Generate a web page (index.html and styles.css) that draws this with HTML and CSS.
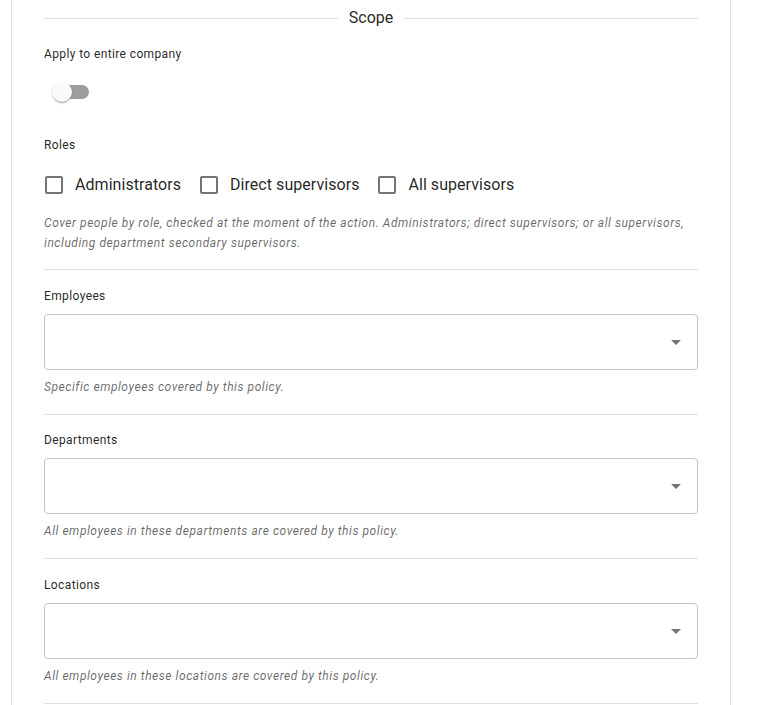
FILE: index.html
```html
<!DOCTYPE html>
<html lang="en">
<head>
<meta charset="utf-8">
<title>Scope</title>
<link rel="stylesheet" href="styles.css">
</head>
<body>
<div class="card">
  <div class="divider-title"><span class="line"></span><span class="title">Scope</span><span class="line"></span></div>

  <div class="field-label apply-label">Apply to entire company</div>
  <div class="switch">
    <span class="track"></span>
    <span class="thumb"></span>
  </div>

  <div class="field-label roles-label">Roles</div>
  <div class="checks">
    <label class="check"><span class="box"></span><span class="check-text">Administrators</span></label>
    <label class="check"><span class="box"></span><span class="check-text">Direct supervisors</span></label>
    <label class="check"><span class="box"></span><span class="check-text">All supervisors</span></label>
  </div>
  <p class="helper roles-helper">Cover people by role, checked at the moment of the action. Administrators; direct supervisors; or all supervisors, including department secondary supervisors.</p>

  <section class="section">
    <div class="field-label">Employees</div>
    <div class="select"><svg class="arrow" width="10" height="5" viewBox="0 0 10 5"><path d="M0 0h10L5 5z" fill="#757575"/></svg></div>
    <p class="helper">Specific employees covered by this policy.</p>
  </section>

  <section class="section tight">
    <div class="field-label">Departments</div>
    <div class="select"><svg class="arrow" width="10" height="5" viewBox="0 0 10 5"><path d="M0 0h10L5 5z" fill="#757575"/></svg></div>
    <p class="helper">All employees in these departments are covered by this policy.</p>
  </section>

  <section class="section">
    <div class="field-label">Locations</div>
    <div class="select"><svg class="arrow" width="10" height="5" viewBox="0 0 10 5"><path d="M0 0h10L5 5z" fill="#757575"/></svg></div>
    <p class="helper">All employees in these locations are covered by this policy.</p>
  </section>
  <div class="end-rule"></div>
</div>
</body>
</html>
```

FILE: styles.css
```css
html, body {
  margin: 0;
  padding: 0;
  background: #ffffff;
}
body {
  font-family: Roboto, "Liberation Sans", Arial, sans-serif;
  color: rgba(0, 0, 0, 0.87);
  height: 705px;
  overflow: hidden;
}
.card {
  margin-left: 11px;
  border-left: 1px solid #e0e0e0;
  border-right: 1px solid #e0e0e0;
  padding: 7px 32px 1px 32px;
  box-sizing: content-box;
  width: 654px;
}
.divider-title {
  display: flex;
  align-items: center;
  gap: 11px;
  height: 22px;
}
.divider-title .line {
  flex: 1;
  height: 1px;
  background: #e0e0e0;
}
.divider-title .title {
  font-size: 16px;
  line-height: 22px;
  color: rgba(0, 0, 0, 0.87);
}
.field-label {
  font-size: 12px;
  line-height: 16px;
  letter-spacing: 0.38px;
  color: rgba(0, 0, 0, 0.87);
}
.apply-label {
  margin-top: 17px;
}
.switch {
  position: relative;
  width: 58px;
  height: 38px;
  margin-left: -1px;
  margin-top: 11px;
}
.switch .track {
  position: absolute;
  left: 12px;
  top: 12px;
  width: 34px;
  height: 14px;
  border-radius: 7px;
  background: #9e9e9e;
}
.switch .thumb {
  position: absolute;
  left: 9px;
  top: 9px;
  width: 20px;
  height: 20px;
  border-radius: 50%;
  background: #fafafa;
  box-shadow: 0 2px 1px -1px rgba(0,0,0,0.2), 0 1px 1px 0 rgba(0,0,0,0.14), 0 1px 3px 0 rgba(0,0,0,0.12);
}
.roles-label {
  margin-top: 26px;
}
.checks {
  display: flex;
  gap: 18px;
  margin-top: 20px;
  height: 24px;
  align-items: center;
}
.check {
  display: flex;
  align-items: center;
  gap: 12px;
}
.check .box {
  width: 14px;
  height: 14px;
  border: 2px solid #757575;
  border-radius: 2px;
  margin-left: 1px;
}
.check-text {
  font-size: 16px;
  line-height: 24px;
  letter-spacing: 0.05px;
}
.helper {
  margin: 0;
  font-size: 12px;
  line-height: 20px;
  font-style: italic;
  letter-spacing: 0.55px;
  color: rgba(0, 0, 0, 0.6);
}
.roles-helper {
  margin-top: 16px;
  padding-bottom: 16px;
}
.section {
  border-top: 1px solid #e0e0e0;
  padding-top: 18px;
  padding-bottom: 17px;
}
.section.tight {
  padding-top: 17px;
}
.select {
  margin-top: 10px;
  height: 54px;
  border: 1px solid #c4c4c4;
  border-radius: 4px;
  display: flex;
  align-items: center;
  justify-content: flex-end;
  padding-right: 16px;
}
.select .arrow {
  display: block;
}
.section .helper {
  margin-top: 7px;
}
.end-rule {
  border-top: 1px solid #e0e0e0;
}
```
